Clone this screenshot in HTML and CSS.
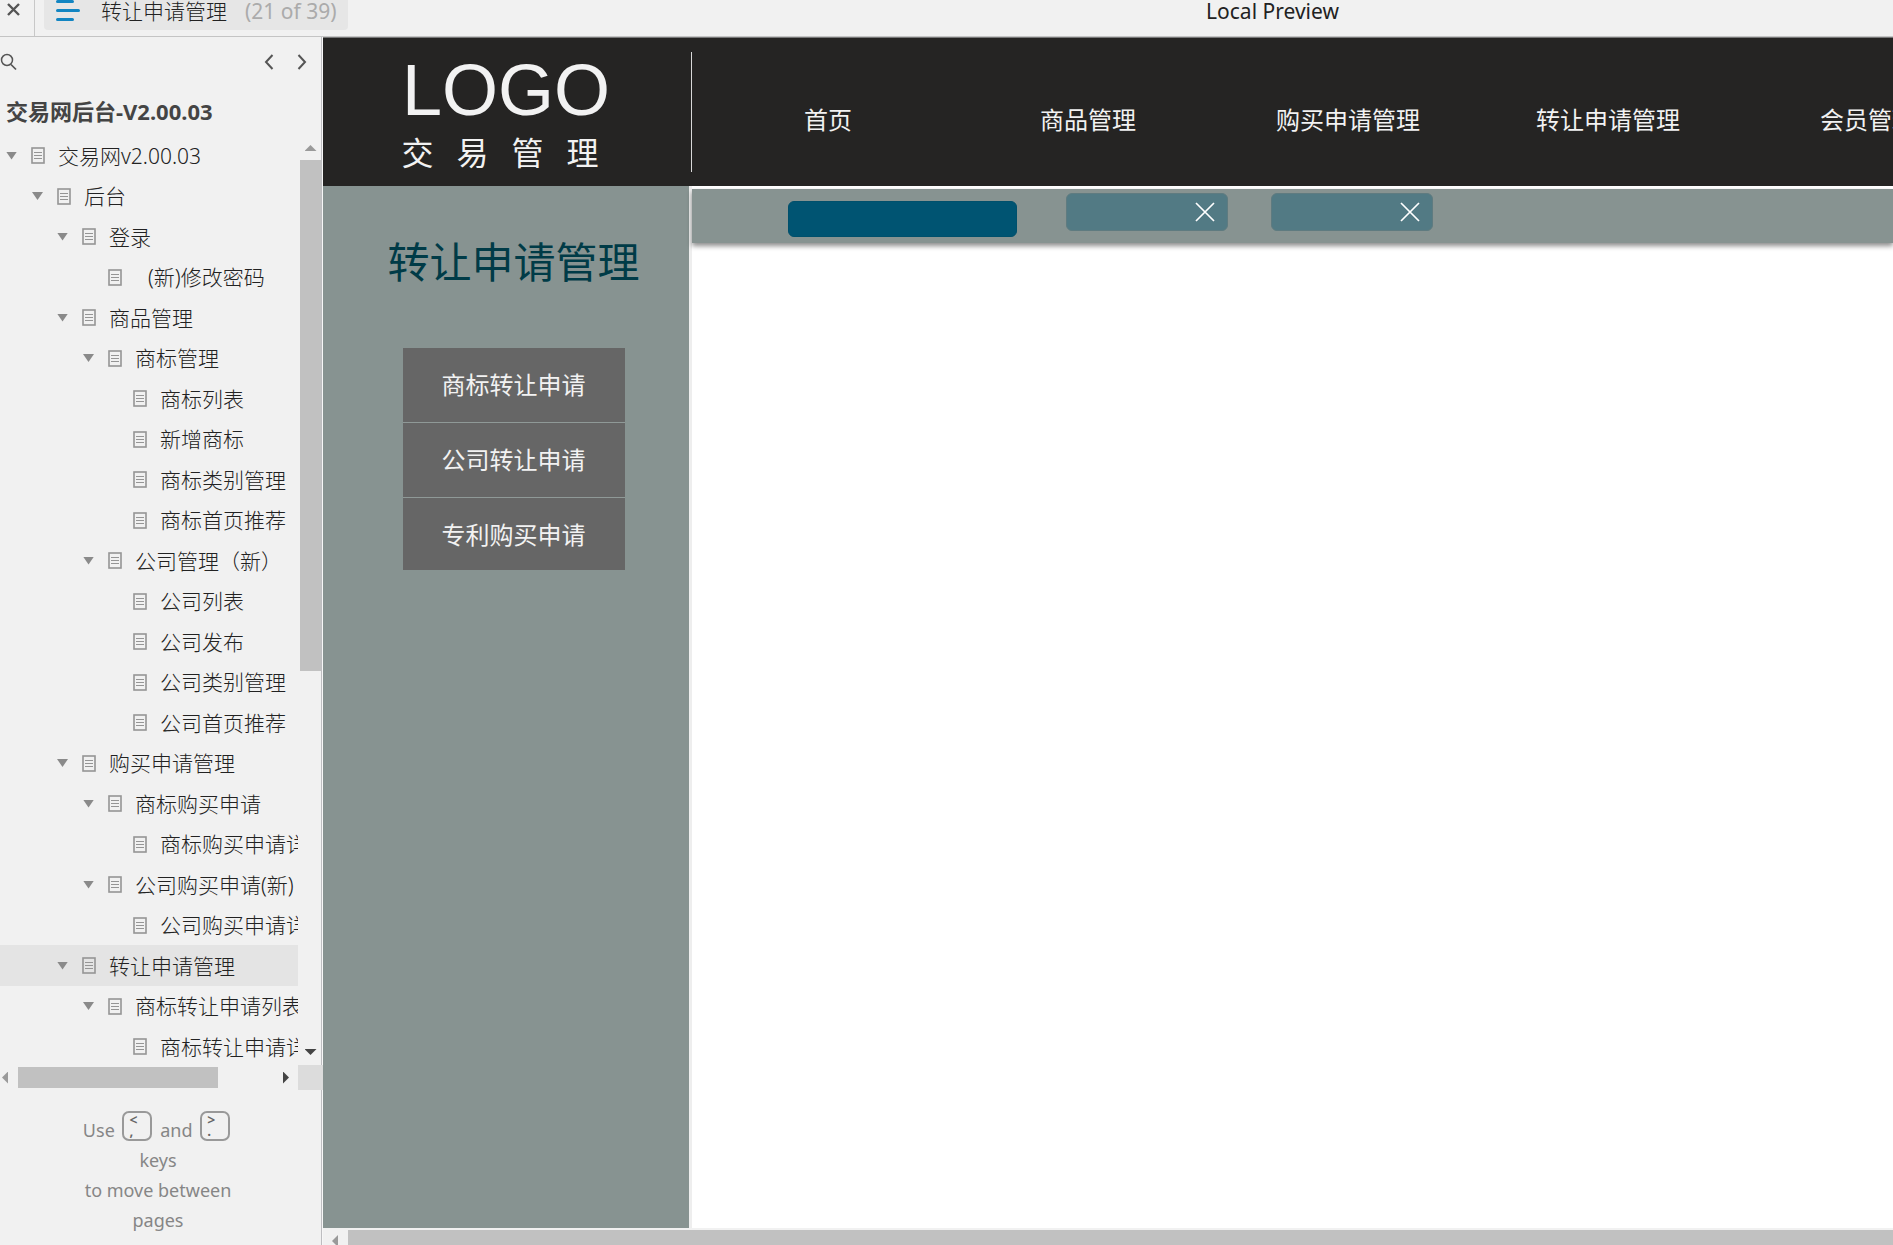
FILE: index.html
```html
<!DOCTYPE html>
<html lang="zh-CN">
<head>
<meta charset="utf-8">
<title>转让申请管理</title>
<link rel="stylesheet" href="styles.css">
</head>
<body>
<svg class="defs" aria-hidden="true">
  <symbol id="page" viewBox="0 0 14 17"><rect x="1" y="1" width="12" height="15" fill="none" stroke="#959595" stroke-width="1.6"/><path d="M3 5.5h8M3 8.5h8M3 11.5h8" stroke="#959595" stroke-width="1.1"/></symbol>
  <symbol id="cross" viewBox="0 0 20 20"><path d="M1 1l18 18M19 1L1 19" stroke="#fff" stroke-width="1.7" fill="none"/></symbol>
</svg>
<header class="topbar">
  <div class="topbar-left">
    <button class="close" aria-label="Close"><svg width="13" height="13" viewBox="0 0 13 13"><path d="M1 1l11 11M12 1L1 12" stroke="#555" stroke-width="2.4"/></svg></button>
    <button class="page-switch">
      <svg width="24" height="21" viewBox="0 0 24 21"><path d="M1.500 1.500h15M1.500 10.500h21M1.500 19.500h15" stroke="#1285c2" stroke-width="3" stroke-linecap="round"/></svg>
      <span class="page-name">转让申请管理</span><span class="page-count">(21 of 39)</span>
    </button>
  </div>
  <div class="topbar-title">Local Preview</div>
</header>
<div class="workspace">
  <aside class="sitemap">
    <div class="tools">
      <button aria-label="Search"><svg width="17" height="18" viewBox="0 0 17 18"><circle cx="7" cy="7" r="5.500" fill="none" stroke="#555" stroke-width="1.500"/><path d="M11 11.500l5 5" stroke="#555" stroke-width="1.700"/></svg></button>
      <span class="steps">
        <button aria-label="Previous page"><svg width="10" height="16" viewBox="0 0 10 16"><path d="M8.500 1L2 8l6.500 7" fill="none" stroke="#555" stroke-width="2"/></svg></button>
        <button aria-label="Next page"><svg width="10" height="16" viewBox="0 0 10 16"><path d="M1.500 1L8 8l-6.500 7" fill="none" stroke="#555" stroke-width="2"/></svg></button>
      </span>
    </div>
    <h1 class="project">交易网后台-V2.00.03</h1>
    <div class="tree-area">
      <ul class="tree">
        <li class="l0 open"><svg class="doc"><use href="#page"/></svg><a href="#">交易网v2.00.03</a></li>
        <li class="l1 open"><svg class="doc"><use href="#page"/></svg><a href="#">后台</a></li>
        <li class="l2 open"><svg class="doc"><use href="#page"/></svg><a href="#">登录</a></li>
        <li class="l3"><svg class="doc"><use href="#page"/></svg><a href="#" class="inset">(新)修改密码</a></li>
        <li class="l2 open"><svg class="doc"><use href="#page"/></svg><a href="#">商品管理</a></li>
        <li class="l3 open"><svg class="doc"><use href="#page"/></svg><a href="#">商标管理</a></li>
        <li class="l4"><svg class="doc"><use href="#page"/></svg><a href="#">商标列表</a></li>
        <li class="l4"><svg class="doc"><use href="#page"/></svg><a href="#">新增商标</a></li>
        <li class="l4"><svg class="doc"><use href="#page"/></svg><a href="#">商标类别管理</a></li>
        <li class="l4"><svg class="doc"><use href="#page"/></svg><a href="#">商标首页推荐</a></li>
        <li class="l3 open"><svg class="doc"><use href="#page"/></svg><a href="#">公司管理（新）</a></li>
        <li class="l4"><svg class="doc"><use href="#page"/></svg><a href="#">公司列表</a></li>
        <li class="l4"><svg class="doc"><use href="#page"/></svg><a href="#">公司发布</a></li>
        <li class="l4"><svg class="doc"><use href="#page"/></svg><a href="#">公司类别管理</a></li>
        <li class="l4"><svg class="doc"><use href="#page"/></svg><a href="#">公司首页推荐</a></li>
        <li class="l2 open"><svg class="doc"><use href="#page"/></svg><a href="#">购买申请管理</a></li>
        <li class="l3 open"><svg class="doc"><use href="#page"/></svg><a href="#">商标购买申请</a></li>
        <li class="l4"><svg class="doc"><use href="#page"/></svg><a href="#">商标购买申请详</a></li>
        <li class="l3 open"><svg class="doc"><use href="#page"/></svg><a href="#">公司购买申请(新)</a></li>
        <li class="l4"><svg class="doc"><use href="#page"/></svg><a href="#">公司购买申请详</a></li>
        <li class="l2 open selected"><svg class="doc"><use href="#page"/></svg><a href="#" aria-current="page">转让申请管理</a></li>
        <li class="l3 open"><svg class="doc"><use href="#page"/></svg><a href="#">商标转让申请列表</a></li>
        <li class="l4"><svg class="doc"><use href="#page"/></svg><a href="#">商标转让申请详</a></li>
      </ul>
      <div class="vbar" aria-hidden="true"><i class="arrow up"></i><div class="vtrack"><div class="vthumb"></div></div><i class="arrow down"></i></div>
      <div class="hbar" aria-hidden="true"><i class="arrow left"></i><div class="htrack"><div class="hthumb"></div></div><i class="arrow right"></i></div>
      <div class="corner"></div>
    </div>
    <div class="help">
      <p>Use <kbd><span>&lt;</span><span>,</span></kbd> and <kbd><span>&gt;</span><span>.</span></kbd><br>keys</p>
      <p>to move between<br>pages</p>
    </div>
  </aside>
  <main class="preview">
    <header class="site-header">
      <div class="brand">
        <div class="logo">LOGO</div>
        <div class="logo-sub"><span>交</span><span>易</span><span>管</span><span>理</span></div>
      </div>
      <nav class="main-nav">
        <a href="#">首页</a><a href="#">商品管理</a><a href="#">购买申请管理</a><a href="#">转让申请管理</a><a href="#">会员管理</a>
      </nav>
    </header>
    <div class="site-body">
      <aside class="side">
        <h2>转让申请管理</h2>
        <nav class="side-menu">
          <a href="#">商标转让申请</a><a href="#">公司转让申请</a><a href="#">专利购买申请</a>
        </nav>
      </aside>
      <section class="content">
        <div class="tabs">
          <button class="tab active" aria-label="当前"></button>
          <button class="tab" aria-label="关闭"><svg width="20" height="20"><use href="#cross"/></svg></button>
          <button class="tab" aria-label="关闭"><svg width="20" height="20"><use href="#cross"/></svg></button>
        </div>
      </section>
    </div>
    <div class="page-scroll" aria-hidden="true"><i class="arrow left"></i><div class="page-thumb"></div></div>
  </main>
</div>
</body>
</html>
```
FILE: styles.css
```css
* { box-sizing: border-box; }
body {
  margin: 0;
  height: 100vh;
  overflow: hidden;
  display: flex;
  flex-direction: column;
  background: #f1f1f1;
  color: #444;
  font-family: "Noto Sans", "Noto Sans CJK SC", sans-serif;
  font-size: 21px;
}
button { border: 0; padding: 0; background: none; font: inherit; color: inherit; display: flex; align-items: center; }
a { color: inherit; text-decoration: none; }
.defs { display: none; }

/* Top bar */
.topbar { display: grid; grid-template-columns: 348px 1fr; height: 37px; flex: none; border-bottom: 1px solid #c4c4c4; }
.topbar-left { display: flex; align-items: flex-start; }
.close { width: 35px; height: 36px; padding: 3px 0 0 7px; align-items: flex-start; border-right: 1px solid #c8c8c8; }
.page-switch { flex: 1; height: 30px; margin-left: 9px; padding: 0 0 0 12px; align-items: flex-start; border-radius: 0 0 4px 4px; background: #e6e6e6; line-height: 22px; white-space: nowrap; }
.page-name { margin-left: 21px; color: #222; font-weight: 300; }
.page-count { margin-left: 18px; color: #ababab; }
.topbar-title { padding-left: 304px; text-align: center; line-height: 22px; color: #222; }

.workspace { flex: 1; min-height: 0; display: grid; grid-template-columns: 323px 1fr; }

/* Sitemap */
.sitemap { display: flex; flex-direction: column; min-height: 0; box-shadow: inset -1px 0 #f7f7f7, inset -2px 0 #bdbdc0; }
.tools { display: flex; justify-content: space-between; align-items: center; height: 49px; padding-right: 16px; }
.steps { display: flex; gap: 23px; }
.project { margin: 0; padding-left: 6px; height: 49px; line-height: 50px; font-size: 22px; font-weight: 700; color: #444; white-space: nowrap; }
.tree-area { flex: 1; min-height: 0; display: grid; grid-template-columns: 298px 25px; grid-template-rows: 1fr 25px; }
.tree { margin: 0; padding: 0; list-style: none; overflow: hidden; min-height: 0; font-weight: 300; color: #222; }
.tree li { height: 40px; display: flex; align-items: center; white-space: nowrap; line-height: 30px; }
.tree li:nth-child(odd) { height: 41px; }
.tree li::before { content: ""; flex: none; width: 11px; height: 8px; margin-right: 14px; }
.tree li.open::before { background: #8a8a8a; clip-path: polygon(0 0, 100% 0, 50% 100%); }
.tree .doc { flex: none; width: 14px; height: 17px; margin-right: 13px; }
.tree .inset { padding-left: 13px; }
.tree .selected { background: #e4e4e4; }
.l0 { padding-left: 6px; }
.l1 { padding-left: 32px; }
.l2 { padding-left: 57px; }
.l3 { padding-left: 83px; }
.l4 { padding-left: 108px; }

/* Scrollbars */
.arrow { flex: none; background: #9a9a9a; }
.up { width: 12px; height: 6px; clip-path: polygon(50% 0, 100% 100%, 0 100%); }
.down { width: 12px; height: 6px; background: #444; clip-path: polygon(0 0, 100% 0, 50% 100%); }
.left { width: 6px; height: 12px; clip-path: polygon(100% 0, 100% 100%, 0 50%); }
.right { width: 6px; height: 12px; background: #444; clip-path: polygon(0 0, 100% 50%, 0 100%); }
.vbar { display: flex; flex-direction: column; align-items: center; padding: 10px 2px 10px 2px; }
.vtrack { flex: 1; width: 21px; padding: 9px 0 8px; }
.vthumb { height: 58%; background: #c1c1c1; }
.hbar { display: flex; align-items: center; padding: 0 9px 0 2px; }
.htrack { flex: 1; padding: 0 10px; }
.hthumb { width: 200px; height: 21px; background: #c1c1c1; }
.corner { background: #dcdcdc; }

/* Keyboard hint */
.help { height: 155px; padding: 21px 0 0; width: 316px; text-align: center; font-size: 18px; line-height: 30px; color: #868686; }
.help p { margin: 0; }
kbd { display: inline-block; overflow: hidden; width: 30px; height: 30px; margin: 0 3px; padding: 1px 0 0 5px; border: 2px solid #999; border-radius: 7px; vertical-align: -4px; text-align: left; font-family: "Noto Sans", sans-serif; font-size: 14px; font-weight: 600; color: #666; }
kbd span { display: block; line-height: 12px; }
kbd span + span { line-height: 10px; }

/* Previewed site */
.preview { display: flex; flex-direction: column; min-width: 0; min-height: 0; overflow: hidden; background: #fff; }
.site-header { flex: none; height: 149px; display: flex; background: #252423; border-top: 1px solid #777; color: #f2f2f2; }
.brand { flex: none; width: 369px; padding-top: 10px; margin: 14px 0; display: flex; flex-direction: column; align-items: center; border-right: 1px solid #d8d8d8; }
.logo { margin-right: 2px; font-family: "Liberation Sans", Arial, sans-serif; font-size: 72px; line-height: 56px; }
.logo-sub { display: flex; gap: 23px; margin-right: 14px; font-size: 32px; line-height: 44px; margin-top: 13px; }
.main-nav { flex: 1; min-width: 0; overflow: hidden; display: flex; align-items: center; padding: 12px 0 0 6px; font-size: 24px; }
.main-nav a { flex: 0 0 260px; text-align: center; white-space: nowrap; }
.site-body { flex: 1; min-height: 0; display: flex; }
.side { flex: none; width: 366px; padding: 46px 0 0 15px; display: flex; flex-direction: column; align-items: center; background: #879391; }
.side h2 { margin: 0; font-size: 42px; line-height: 60px; font-weight: 400; color: #003b47; white-space: nowrap; }
.side-menu { display: flex; flex-direction: column; gap: 1px; width: 222px; margin-top: 56px; font-size: 24px; background: #8f9997; }
.side-menu a { height: 74px; line-height: 74px; text-align: center; background: #666; color: #f2f2f2; }
.side-menu a:last-child { height: 72px; }
.content { flex: 1; min-width: 0; padding-top: 3px; border-left: 3px solid #eee; background: #fff; }
.tabs { height: 54px; display: flex; align-items: flex-start; gap: 43px; padding: 4px 0 0 96px; background: #879391; box-shadow: 0 3px 5px rgba(0, 0, 0, .45); }
.tab { width: 162px; height: 38px; justify-content: flex-end; padding-right: 12px; border: 1px solid #5f7b80; border-radius: 6px; background: #527a84; }
.tab.active { width: 229px; height: 36px; margin: 8px 6px 0 0; border-color: #00506c; background: #005472; }
.page-scroll { flex: none; height: 17px; display: flex; padding: 2px 0 0 9px; background: #f1f1f1; }
.page-scroll .arrow { margin-top: 5px; }
.page-thumb { flex: 1; margin-left: 10px; background: #c1c1c1; }
```
